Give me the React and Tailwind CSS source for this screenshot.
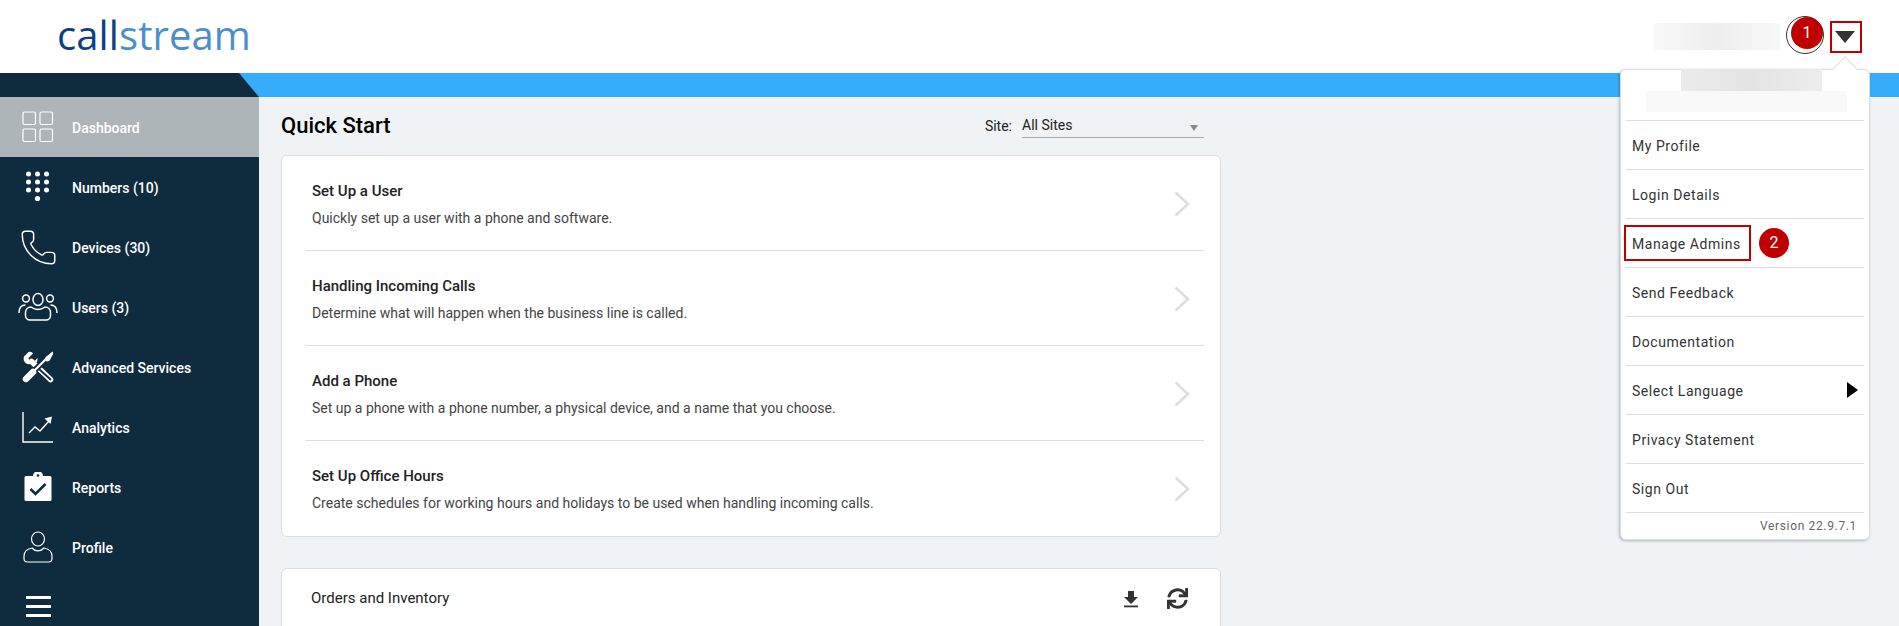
import React from "react";
import { Phone } from "lucide-react";
import { FaSync } from "react-icons/fa";

const DashIcon = () => (
  <svg width="32" height="32" viewBox="0 0 32 32" fill="none" stroke="#fff" strokeWidth="1.2">
    <rect x="1" y="1" width="12.5" height="12.5" rx="1.5" />
    <rect x="18" y="1" width="12.5" height="12.5" rx="1.5" />
    <rect x="1" y="18" width="12.5" height="12.5" rx="1.5" />
    <rect x="18" y="18" width="12.5" height="12.5" rx="1.5" />
  </svg>
);
const DotsIcon = () => (
  <svg width="32" height="32" viewBox="0 0 32 32" fill="#fff">
    {[6.5, 15.5, 24.5].map((x) => [3, 11, 19].map((y) => <circle key={x + "-" + y} cx={x} cy={y} r="2.5" />))}
    <circle cx="15.5" cy="27.5" r="2.6" />
  </svg>
);
const UsersIcon = () => (
  <svg width="40" height="30" viewBox="0 0 40 30" fill="none" stroke="#fff" strokeWidth="1.5">
    <ellipse cx="20" cy="7.5" rx="5" ry="6" />
    <circle cx="8" cy="6.5" r="3.4" />
    <circle cx="32" cy="6.5" r="3.4" />
    <path d="M1 21c0-5 2.500-8 6.500-8 M39 21c0-5-2.500-8-6.500-8" />
    <path d="M13 15c-3 0-5.500 2-5.500 5.500v3c0 2.500 2 4.500 4.500 4.500h16c2.500 0 4.500-2 4.500-4.500v-3c0-3.500-2.500-5.500-5.500-5.500-2 1.500-4.500 2.500-7 2.500s-5-1-7-2.500z" />
  </svg>
);
const ToolsIcon = () => (
  <svg width="32" height="32" viewBox="0 0 32 32" fill="none">
    <path d="M11 2.500 6.500 7l1 3.500 3.500 1L15.500 7c.5 4-2 7-6 6.500L8 13C4 14 .5 10 2 5.500L6.500 1c2-.8 3.500 0 4.500 1.500z" fill="#fff" />
    <path d="M9.500 10.500 28.500 28.500" stroke="#fff" strokeWidth="5.500" strokeLinecap="round" />
    <path d="M17 18 28.500 28.500" stroke="#0f2c3f" strokeWidth="1.800" strokeLinecap="round" />
    <path d="M10 22 24 8" stroke="#0f2c3f" strokeWidth="6" />
    <path d="M9 23 24 8" stroke="#fff" strokeWidth="2.200" />
    <path d="M4 28 11 21" stroke="#fff" strokeWidth="6.500" strokeLinecap="round" />
    <path d="M23 9.500c-.8-2 .5-3.500 2-4.500l5.500-4.500c.8 1 .8 1.500.5 2.500l-3 6c-1 1.500-3 2-5 .5z" fill="#fff" />
  </svg>
);
const ChartIcon = () => (
  <svg width="32" height="32" viewBox="0 0 32 32" fill="none" stroke="#fff" strokeWidth="1.4">
    <path d="M1 1v30h30" />
    <path d="M7 22l6-6 5 4 9-10" />
    <path d="M22.500 7.500l7.500-2-1.500 7.500z" fill="#fff" stroke="none" />
  </svg>
);
const ClipIcon = () => (
  <svg width="28" height="30" viewBox="0 0 28 30" fill="none">
    <path d="M2 4h7a5 5 0 0 1 10 0h7a1.500 1.500 0 0 1 1.500 1.500v22a1.500 1.500 0 0 1-1.500 1.500H2a1.500 1.500 0 0 1-1.500-1.500v-22A1.500 1.500 0 0 1 2 4z" fill="#fff" />
    <circle cx="14" cy="3.500" r="1.300" fill="#0f2c3f" />
    <path d="M6.500 17l5 5 10-10" stroke="#0f2c3f" strokeWidth="2.600" />
  </svg>
);
const ProfileIcon = () => (
  <svg width="30" height="32" viewBox="0 0 30 32" fill="none" stroke="#fff" strokeWidth="1.200">
    <ellipse cx="15" cy="8" rx="6.500" ry="7" />
    <path d="M9 17c-5 1-8 4-8 8v2.500c0 2 1.500 3.500 3.500 3.500h21c2 0 3.500-1.500 3.500-3.500V25c0-4-3-7-8-8-1.500 1.800-3.500 2.800-6 2.800s-4.500-1-6-2.800z" />
  </svg>
);

const nav = [
  ["Dashboard", <DashIcon />],
  ["Numbers (10)", <DotsIcon />],
  ["Devices (30)", <Phone size={39} color="#fff" strokeWidth={0.9} />],
  ["Users (3)", <UsersIcon />],
  ["Advanced Services", <ToolsIcon />],
  ["Analytics", <ChartIcon />],
  ["Reports", <ClipIcon />],
  ["Profile", <ProfileIcon />],
];

const quick = [
  ["Set Up a User", "Quickly set up a user with a phone and software."],
  ["Handling Incoming Calls", "Determine what will happen when the business line is called."],
  ["Add a Phone", "Set up a phone with a phone number, a physical device, and a name that you choose."],
  ["Set Up Office Hours", "Create schedules for working hours and holidays to be used when handling incoming calls."],
];

const menu = ["My Profile", "Login Details", "Manage Admins", "Send Feedback", "Documentation", "Select Language", "Privacy Statement", "Sign Out"];

export default function App() {
  return (
    <div className="relative flex h-[626px] w-full flex-col overflow-hidden bg-[#eff3f6] font-['Roboto',sans-serif]">
      <header className="flex h-[73px] items-center justify-between bg-white pl-[57px] pr-[37px]">
        <div className="mt-[-4px] font-['Open_Sans',sans-serif] text-[40px] leading-none tracking-[0.1px]">
          <span className="text-[#0f3f85]">call</span>
          <span className="text-[#4a8fc9]">stream</span>
        </div>
        <div className="flex items-center">
          <div className="mr-[6px] h-[27px] w-[126px] bg-gradient-to-r from-[#f8f8f8] via-[#eeeeee] to-[#f8f8f8]" />
          <div className="mr-[6px] mt-[-3px] flex h-[38px] w-[38px] items-start justify-end rounded-full border border-[#333] bg-white">
            <div className="flex h-[32px] w-[32px] items-center justify-center rounded-full bg-[#c00000] text-[16px] text-white">1</div>
          </div>
          <div className="flex h-[32px] w-[32px] items-center justify-center border-2 border-[#c00000] pr-[2px]">
            <div className="h-0 w-0 border-x-[10px] border-t-[12px] border-x-transparent border-t-[#333]" />
          </div>
        </div>
      </header>

      <div className="h-[24px] bg-[#36adfb]">
        <div className="h-full w-[259px] bg-[#0f2c3f] [clip-path:polygon(0_0,239px_0,259px_100%,0_100%)]" />
      </div>

      <div className="flex min-h-0 flex-1">
        <aside className="flex w-[259px] shrink-0 flex-col bg-[#0f2c3f]">
          {nav.map(([label, icon], i) => (
            <div key={label} className={`flex h-[60px] shrink-0 items-center ${i === 0 ? "bg-[#adb5b9]" : ""}`}>
              <div className="flex w-[72px] shrink-0 items-center justify-center pl-[4px] text-white">{icon}</div>
              <span className="mt-[2px] text-[14px] font-medium text-white">{label}</span>
            </div>
          ))}
          <div className="ml-[26px] mt-[19px] flex w-[25px] flex-col gap-[6px]">
            <div className="h-[3px] bg-white" />
            <div className="h-[3px] bg-white" />
            <div className="h-[3px] bg-white" />
          </div>
        </aside>

        <main className="w-[962px] pl-[22px]">
          <div className="flex h-[58px] w-[923px] items-center justify-between">
            <h1 className="mt-[-1px] text-[22px] font-medium text-black">Quick Start</h1>
            <div className="flex items-center text-[14px] text-[#222]">
              <span className="mr-[10px]">Site:</span>
              <div className="relative h-[23px] w-[182px] border-b border-[#aaa] text-[#222]">
                All Sites
                <div className="absolute right-[6px] top-[10px] h-0 w-0 border-x-[4px] border-t-[6px] border-x-transparent border-t-[#888]" />
              </div>
            </div>
          </div>

          <section className="w-[940px] rounded-[6px] border border-[#dddddd] bg-white pl-[23px] pr-[16px]">
            {quick.map(([t, d], i) => (
              <div key={t} className={`relative flex h-[95px] flex-col pl-[7px] pt-[25px] ${i < 3 ? "border-b border-[#dddddd]" : ""}`}>
                <div className="text-[15px] font-medium leading-[20px] text-[#222]">{t}</div>
                <div className="mt-[7px] text-[14px] leading-[20px] text-[#444]">{d}</div>
                <svg width="16" height="26" viewBox="0 0 16 26" fill="none" stroke="#dddddd" strokeWidth="2.500" className="absolute right-[14px] top-[35px]">
                  <path d="M1.500 1.500 14 13 1.500 24.500" />
                </svg>
              </div>
            ))}
          </section>

          <section className="mt-[31px] flex h-[60px] w-[940px] items-start justify-between rounded-t-[6px] border border-[#dddddd] bg-white pl-[29px] pr-[32px] pt-[19px]">
            <span className="text-[15px] leading-[20px] text-[#222]">Orders and Inventory</span>
            <div className="flex items-center gap-[28px] text-[#333]">
              <svg width="16" height="18" viewBox="0 0 16 18" fill="#333">
                <path d="M5 1h6v6h4l-7 7-7-7h4z" />
                <rect x="1" y="15.500" width="14" height="1.800" />
              </svg>
              <FaSync size={21} color="#333" />
            </div>
          </section>
        </main>
      </div>

      {/* dropdown */}
      <div className="absolute left-[1620px] top-[69px] w-[250px] rounded-[6px] border border-[#dddddd] bg-white px-[5px] shadow-[-1px_1px_3px_rgba(0,0,0,0.25)]">
        <div className="absolute right-[15px] top-[-10px] h-[18px] w-[18px] rotate-45 border-l border-t border-[#dddddd] bg-white" />
        <div className="relative h-[51px] border-b border-[#dddddd]">
          <div className="absolute left-[55px] top-[-1px] h-[22px] w-[141px] bg-gradient-to-r from-[#ebebeb] via-[#e4e4e4] to-[#ececec]" />
          <div className="absolute left-[20px] top-[21px] h-[21px] w-[201px] bg-[#f9f9f9]" />
        </div>
        {menu.map((m) => (
          <div key={m} className="relative flex h-[49px] items-center justify-between border-b border-[#dddddd] pl-[6px] pr-[6px] text-[14px] tracking-[0.55px] text-[#333]">
            <span className="mt-[2px]">{m}</span>
            {m === "Select Language" && (
              <div className="h-0 w-0 border-y-[8px] border-l-[11px] border-y-transparent border-l-black" />
            )}
            {m === "Manage Admins" && (
              <>
                <div className="absolute left-[-2px] top-[6px] h-[36px] w-[127px] border-2 border-[#c00000]" />
                <div className="absolute left-[133px] top-[9px] flex h-[30px] w-[30px] items-center justify-center rounded-full bg-[#c00000] text-[16px] tracking-normal text-white">2</div>
              </>
            )}
          </div>
        ))}
        <div className="flex h-[26px] items-center justify-end pr-[7px] text-[12px] tracking-[0.65px] text-[#666]">Version 22.9.7.1</div>
      </div>
    </div>
  );
}
